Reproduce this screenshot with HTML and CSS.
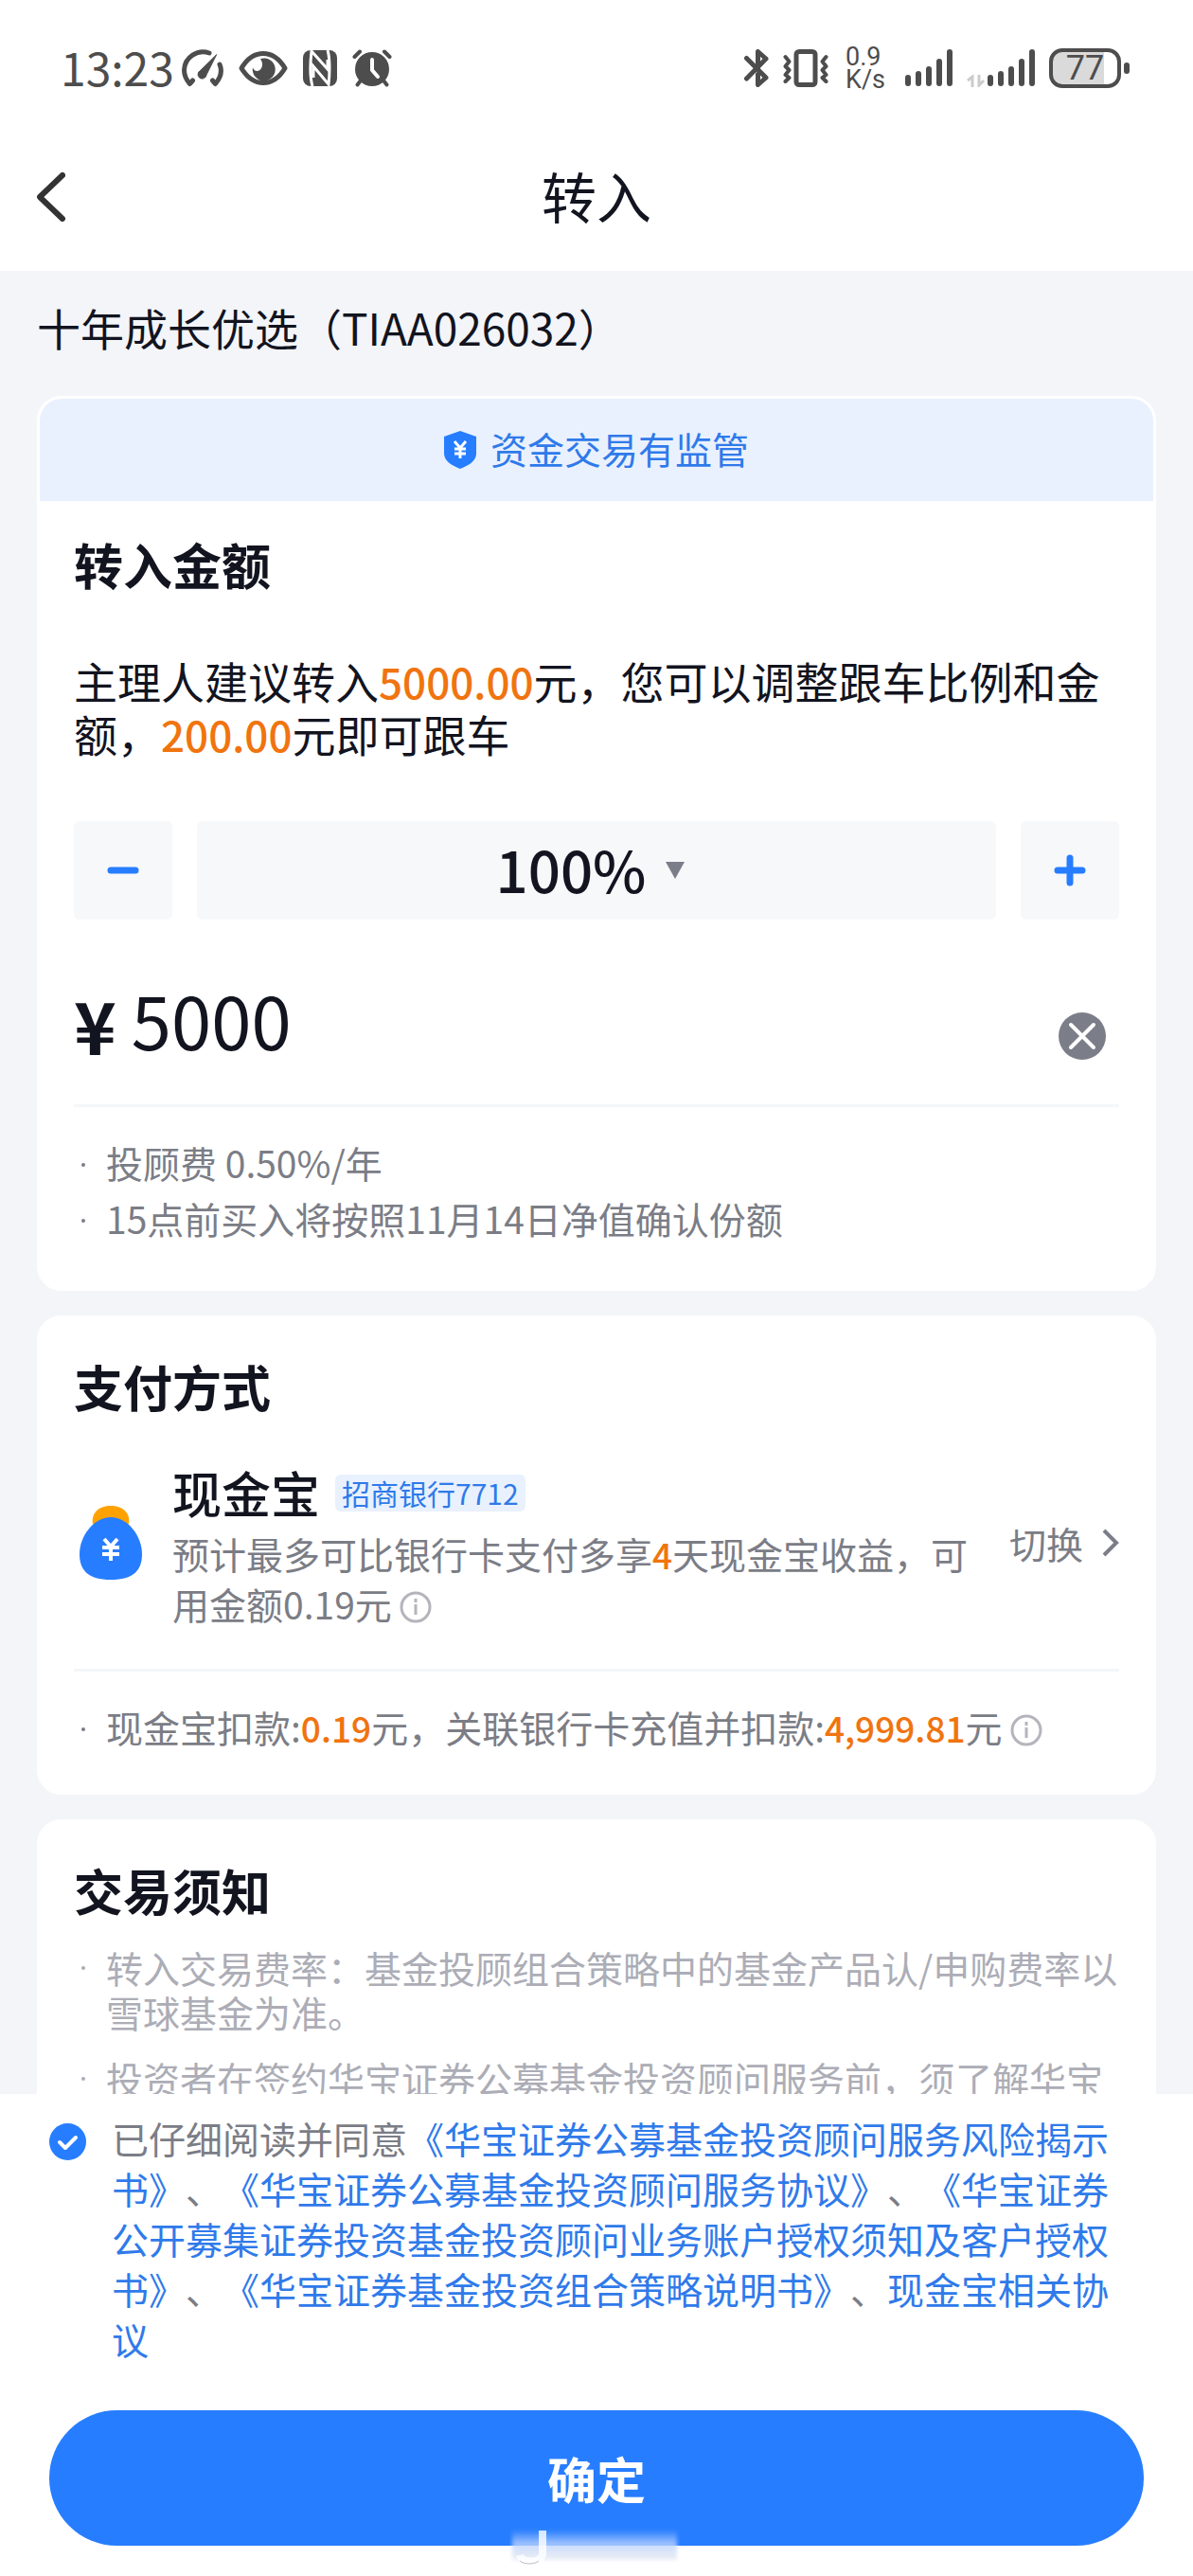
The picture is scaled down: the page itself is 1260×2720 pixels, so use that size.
FILE: index.html
```html
<!DOCTYPE html>
<html lang="zh-CN">
<head>
    <meta charset="UTF-8">
    <meta name="viewport" content="width=device-width, initial-scale=1.0">
    <title>转入</title>
    <link rel="stylesheet" href="styles.css">
</head>
<body>
    <div class="page">
        <header class="header">
            <div class="status-bar">
                <div class="status-left">
                    <span class="time">13:23</span>
                    <svg class="icon-gauge" width="44" height="40" viewBox="0 0 44 40" fill="none" stroke="#4d4d4d" stroke-width="5" stroke-linecap="round" stroke-linejoin="round">
                        <path d="M29 4C17 -0.500 3 8 2.500 22c0 6 2 10 6 14.500l3-3.500"/>
                        <path d="M40 16c3 7 1 14-4.500 20.500l-3-3.500"/>
                        <path d="M36.500 6L26 27a4.500 4.500 0 1 1-6.500-4.500z" fill="#4d4d4d" stroke-width="1"/>
                    </svg>
                    <svg class="icon-eye" width="52" height="36" viewBox="0 0 52 36" fill="none" stroke="#4d4d4d" stroke-width="5">
                        <path d="M3 18C9 8 17 2.500 26 2.500S43 8 49 18C43 28 35 33.500 26 33.500S9 28 3 18z" stroke-linejoin="round"/>
                        <path d="M23 8a12 12 0 1 1-8 9c1 5 7 5 9 1 2-3 1-7-1-10z" fill="#4d4d4d" stroke="none"/>
                    </svg>
                    <svg class="icon-nfc" width="36" height="38" viewBox="0 0 36 38">
                        <rect width="36" height="38" rx="8" fill="#4d4d4d"/>
                        <path d="M10 38C7 28 8 10 9 1L26 20V10M26 0c3 10 2 28 1 36L11 17v12" fill="none" stroke="#fff" stroke-width="3"/>
                    </svg>
                    <svg class="icon-alarm" width="42" height="40" viewBox="0 0 42 40" fill="none" stroke="#4d4d4d" stroke-width="4" stroke-linecap="round">
                        <circle cx="21" cy="21" r="18" fill="#4d4d4d" stroke="none"/>
                        <path d="M2.500 8L8 2.500M39.500 8L34 2.500M9 33l-3.500 4.500M33 33l3.500 4.500"/>
                        <path d="M21 11v11l6 7" stroke="#fff"/>
                    </svg>
                </div>
                <div class="status-right">
                    <svg class="icon-bluetooth" width="26" height="40" viewBox="0 0 26 40" fill="none" stroke="#4d4d4d" stroke-width="5" stroke-linecap="round" stroke-linejoin="round">
                        <path d="M2.500 9.500L23 30l-8.500 7.500v-11M2.500 31L23 10l-8.500-7.500V20"/>
                    </svg>
                    <svg class="icon-vibrate" width="48" height="40" viewBox="0 0 48 40" fill="none" stroke="#4d4d4d" stroke-width="4" stroke-linecap="round" stroke-linejoin="round">
                        <rect x="14" y="2.500" width="20" height="35" rx="3" stroke-width="5"/>
                        <path d="M2.500 8l4 5-4 5 4 4-4 5 4 3-4 4M45.500 8l-4 5 4 5-4 4 4 5-4 3 4 4"/>
                    </svg>
                    <span class="speed">0.9<br>K/s</span>
                    <svg class="icon-signal" width="50" height="40" viewBox="0 0 50 40" stroke="#4d4d4d" stroke-width="6" stroke-linecap="round">
                        <path d="M3 30v6M14 26v10M25 21v15M36 13v23M47 3v33"/>
                    </svg>
                    <svg class="icon-signal-data" width="72" height="40" viewBox="0 0 72 40">
                        <path d="M1 33l5-4v11M13 27v11l5-5" fill="none" stroke="#ccc" stroke-width="3"/>
                        <path d="M25 30v6M36 26v10M47 21v15M58 13v23M69 3v33" stroke="#4d4d4d" stroke-width="6" stroke-linecap="round"/>
                    </svg>
                    <div class="battery"><span class="battery-level">77</span></div>
                </div>
            </div>
            <nav class="nav-bar">
                <button class="back" type="button" aria-label="返回">
                    <svg width="30" height="52" viewBox="0 0 30 52" fill="none" stroke="#333" stroke-width="6" stroke-linecap="round" stroke-linejoin="round">
                        <path d="M27 3L3 26l24 23"/>
                    </svg>
                </button>
                <h1>转入</h1>
            </nav>
        </header>

        <main class="content">
            <p class="fund-name">十年成长优选（TIAA026032）</p>

            <section class="card">
                <div class="banner">
                    <svg width="34" height="40" viewBox="0 0 34 40">
                        <path d="M17 0l17 6v18c0 8-9 13-17 16C9 37 0 32 0 24V6z" fill="#277dff"/>
                        <path d="M11 11l6 7 6-7M17 18v11M11 19h12M11 24h12" fill="none" stroke="#fff" stroke-width="3"/>
                    </svg>
                    <span>资金交易有监管</span>
                </div>
                <div class="card-body">
                    <h2>转入金额</h2>
                    <p class="advice">主理人建议转入<em>5000.00</em>元，您可以调整跟车比例和金额，<em>200.00</em>元即可跟车</p>
                    <div class="stepper">
                        <button class="step" type="button" aria-label="减少">
                            <svg width="34" height="34" viewBox="0 0 34 34" stroke="#277dff" stroke-width="7" stroke-linecap="round">
                                <path d="M4 17h26"/>
                            </svg>
                        </button>
                        <label class="ratio">
                            <select aria-label="跟车比例">
                                <option>100%</option>
                            </select>
                            <svg width="20" height="18" viewBox="0 0 20 18">
                                <path d="M0 0h20L10 18z" fill="#7b7d88"/>
                            </svg>
                        </label>
                        <button class="step" type="button" aria-label="增加">
                            <svg width="34" height="34" viewBox="0 0 34 34" stroke="#277dff" stroke-width="7" stroke-linecap="round">
                                <path d="M4 17h26M17 4v26"/>
                            </svg>
                        </button>
                    </div>
                    <div class="amount">
                        <label for="amount">¥</label>
                        <input type="text" id="amount" name="amount" value="5000" inputmode="decimal">
                        <button class="clear" type="button" aria-label="清空">
                            <svg width="50" height="50" viewBox="0 0 50 50">
                                <circle cx="25" cy="25" r="25" fill="#7b7d88"/>
                                <path d="M13 13l24 24M37 13L13 37" stroke="#fff" stroke-width="4" stroke-linecap="round"/>
                            </svg>
                        </button>
                    </div>
                    <ul class="notes">
                        <li>投顾费 0.50%/年</li>
                        <li>15点前买入将按照11月14日净值确认份额</li>
                    </ul>
                </div>
            </section>

            <section class="card">
                <div class="card-body">
                    <h2>支付方式</h2>
                    <div class="payment">
                        <svg class="bag" width="66" height="78" viewBox="0 0 66 78">
                            <path d="M14 19C12 7 21 0 33 0s21 7 19 19z" fill="#ffa200"/>
                            <path d="M33 12c18 0 33 20 33 39 0 17-9 27-33 27S0 68 0 51C0 32 15 12 33 12z" fill="#277dff"/>
                            <path d="M26 35l7 8 7-8M33 43v15M24 44h18M24 51h18" fill="none" stroke="#fff" stroke-width="4"/>
                        </svg>
                        <div class="payment-info">
                            <div class="payment-name">
                                <strong>现金宝</strong>
                                <span class="tag">招商银行7712</span>
                            </div>
                            <p>预计最多可比银行卡支付多享<em>4</em>天现金宝收益，可用金额0.19元<svg class="info" width="34" height="34" viewBox="0 0 34 34" fill="none" stroke="#b4b5bc" stroke-width="3">
                                <circle cx="17" cy="17" r="15"/>
                                <path d="M17 14v11M17 8v4"/>
                            </svg></p>
                        </div>
                        <a class="switch" href="#">切换
                            <svg width="18" height="30" viewBox="0 0 18 30" fill="none" stroke="#7b7d88" stroke-width="4">
                                <path d="M2 2l13 13L2 28"/>
                            </svg>
                        </a>
                    </div>
                    <ul class="notes">
                        <li>现金宝扣款:<em>0.19</em>元，关联银行卡充值并扣款:<em>4,999.81</em>元<svg class="info" width="34" height="34" viewBox="0 0 34 34" fill="none" stroke="#b4b5bc" stroke-width="3">
                            <circle cx="17" cy="17" r="15"/>
                            <path d="M17 14v11M17 8v4"/>
                        </svg></li>
                    </ul>
                </div>
            </section>

            <section class="card">
                <div class="card-body">
                    <h2>交易须知</h2>
                    <ul class="terms">
                        <li>转入交易费率：基金投顾组合策略中的基金产品认/申购费率以雪球基金为准。</li>
                        <li>投资者在签约华宝证券公募基金投资顾问服务前，须了解华宝</li>
                    </ul>
                </div>
            </section>
        </main>

        <footer class="footer">
            <div class="agreement">
                <input type="checkbox" id="agree" checked>
                <p><label for="agree">已仔细阅读并同意</label><a href="#">《华宝证券公募基金投资顾问服务风险揭示书》</a>、<a href="#">《华宝证券公募基金投资顾问服务协议》</a>、<a href="#">《华宝证券公开募集证券投资基金投资顾问业务账户授权须知及客户授权书》</a>、<a href="#">《华宝证券基金投资组合策略说明书》</a>、<a href="#">现金宝相关协议</a></p>
            </div>
            <div class="submit-row">
                <button class="submit" type="submit">确定</button>
                <svg class="smudge" width="180" height="40" viewBox="0 0 180 40">
                    <defs>
                        <linearGradient id="fade" x1="0" y1="0" x2="0" y2="1">
                            <stop offset="0" stop-color="#a9c8ff" stop-opacity="0"/>
                            <stop offset="0.450" stop-color="#b9d2ff" stop-opacity="0.8"/>
                            <stop offset="1" stop-color="#e2e6ee" stop-opacity="0.7"/>
                        </linearGradient>
                        <filter id="soft"><feGaussianBlur stdDeviation="2"/></filter>
                    </defs>
                    <rect x="3" y="3" width="174" height="32" fill="url(#fade)" filter="url(#soft)"/>
                    <path d="M35 4v24c0 11-22 11-24 2" fill="none" stroke="#fff" stroke-width="8" stroke-opacity="0.8"/>
                    <path d="M11 36c4 4 16 4 20 0" fill="none" stroke="#b9bcc6" stroke-width="1"/>
                </svg>
            </div>
        </footer>
    </div>
</body>
</html>
```

FILE: styles.css
```css
* {
    box-sizing: border-box;
}
body {
    margin: 0;
    font-family: "Noto Sans CJK SC", sans-serif;
    font-size: 39px;
    color: #12141f;
    background-color: #f3f5f9;
    text-spacing-trim: space-all;
}
h1, h2, p, ul {
    margin: 0;
    padding: 0;
}
svg {
    flex: none;
}
button {
    padding: 0;
    border: none;
    background: none;
    font-family: inherit;
    cursor: pointer;
}
a {
    color: inherit;
    text-decoration: none;
}
em {
    color: #f0740f;
    font-size: 37px;
    font-style: normal;
    font-weight: 500;
}
.page {
    display: flex;
    flex-direction: column;
    height: 100vh;
}

/* header */
.header {
    flex: none;
    background-color: #fff;
}
.status-bar {
    display: flex;
    justify-content: space-between;
    height: 130px;
    padding: 14px 76px 0 64px;
    color: #4d4d4d;
}
.status-left,
.status-right {
    display: flex;
    align-items: center;
    gap: 16px;
}
.status-right {
    gap: 15px;
}
.time {
    margin-right: -8px;
    padding-bottom: 4px;
    font-size: 48px;
}
.speed {
    margin-left: 3px;
    font-family: Roboto, sans-serif;
    font-size: 27px;
    line-height: 24px;
}
.icon-signal {
    margin-left: 6px;
}
.battery {
    position: relative;
    width: 76px;
    height: 42px;
    border: 4px solid #4d4d4d;
    border-radius: 14px;
    background: linear-gradient(to right, #dadada 80%, #fff 80%);
}
.battery::after {
    content: "";
    position: absolute;
    top: 11px;
    right: -13px;
    width: 6px;
    height: 12px;
    border-radius: 3px;
    background-color: #4d4d4d;
}
.battery-level {
    display: block;
    font-family: Roboto, sans-serif;
    font-size: 36px;
    line-height: 34px;
    text-align: center;
}
.nav-bar {
    display: grid;
    grid-template-columns: 1fr auto 1fr;
    align-items: center;
    height: 156px;
    padding: 0 39px;
}
.back {
    display: flex;
    justify-self: start;
}
.nav-bar h1 {
    padding-bottom: 4px;
    font-size: 58px;
    font-weight: 400;
}

/* cards */
.content {
    flex: 1;
    min-height: 0;
    overflow: hidden;
    padding: 0 39px;
}
.fund-name {
    padding: 29px 0 43px;
    font-size: 46px;
    line-height: 60px;
}
.card {
    margin-bottom: 26px;
    border: 3px solid #fff;
    border-radius: 26px;
    background-color: #fff;
    overflow: hidden;
}
.card-body {
    padding: 38px 36px;
}
.banner {
    display: flex;
    align-items: center;
    justify-content: center;
    gap: 15px;
    height: 108px;
    background-color: #e9f1fe;
    color: #2f7aea;
}
.banner span {
    padding-bottom: 4px;
}
.banner + .card-body {
    padding: 33px 36px 44px;
}
.card h2 {
    font-size: 52px;
    line-height: 68px;
}
.advice {
    margin-top: 61px;
    font-size: 46px;
    line-height: 55px;
}
.advice em {
    font-size: 44px;
}
.stepper {
    display: flex;
    gap: 26px;
    margin-top: 64px;
}
.step,
.ratio {
    display: flex;
    align-items: center;
    justify-content: center;
    height: 104px;
    border-radius: 6px;
    background-color: #f6f8fa;
}
.step {
    width: 104px;
}
.ratio {
    flex: 1;
    gap: 20px;
    padding-right: 14px;
}
.ratio select {
    appearance: none;
    padding: 0 0 6px;
    border: none;
    background: none;
    color: inherit;
    font-family: inherit;
    font-size: 60px;
    font-weight: 500;
}
.amount {
    display: flex;
    align-items: center;
    height: 198px;
    padding: 14px 14px 0 0;
    border-bottom: 3px solid #f5f6f8;
}
.amount label {
    padding-top: 10px;
    font-size: 76px;
    font-weight: 700;
}
.amount input {
    flex: 1;
    min-width: 0;
    padding: 0 0 0 16px;
    border: none;
    background: none;
    color: inherit;
    font-family: inherit;
    font-size: 76px;
}
.clear {
    display: flex;
    padding-top: 36px;
}
.notes,
.terms {
    list-style: none;
}
.notes {
    padding-top: 29px;
    color: #7b7d86;
    line-height: 59px;
}
.notes li,
.terms li {
    position: relative;
    padding-left: 34px;
}
.notes li::before,
.terms li::before {
    content: "";
    position: absolute;
    top: 30px;
    left: 8px;
    width: 4px;
    height: 4px;
    border-radius: 2px;
    background-color: currentColor;
}
.terms li::before {
    top: 22px;
}
.info {
    margin-left: 8px;
    vertical-align: -4px;
}

/* payment */
.payment {
    display: flex;
    align-items: center;
    padding: 40px 0 43px;
    border-bottom: 3px solid #f5f6f8;
    color: #7b7d86;
}
.bag {
    margin: 0 32px 0 6px;
}
.payment-info {
    flex: 1;
    line-height: 52px;
}
.payment-name {
    display: flex;
    align-items: center;
    gap: 16px;
    height: 76px;
    color: #12141f;
}
.payment-name strong {
    font-size: 52px;
    font-weight: 500;
}
.tag {
    padding: 0 7px;
    border-radius: 6px;
    background-color: #e9f1fe;
    color: #2f7aea;
    font-size: 30px;
    line-height: 39px;
}
.switch {
    display: flex;
    align-items: center;
    gap: 20px;
    margin-left: 30px;
}
.terms {
    padding-top: 24px;
    color: #acadb6;
    line-height: 47px;
}
.terms li {
    margin-bottom: 23px;
}

/* footer */
.footer {
    flex: none;
    padding: 20px 52px 32px;
    background-color: #fff;
}
.agreement {
    display: flex;
    gap: 27px;
    color: #7b7d86;
    line-height: 53px;
}
.agreement a {
    color: #2f7aea;
}
.agreement input {
    flex: none;
    appearance: none;
    width: 39px;
    height: 39px;
    margin: 11px 0 0;
    border-radius: 50%;
    background: #277dff url("data:image/svg+xml,%3Csvg xmlns='http://www.w3.org/2000/svg' viewBox='0 0 39 39'%3E%3Cpath d='M11 20l6 6 11-11' fill='none' stroke='%23fff' stroke-width='4' stroke-linecap='round' stroke-linejoin='round'/%3E%3C/svg%3E");
}
.submit-row {
    position: relative;
    margin-top: 49px;
}
.submit {
    display: block;
    width: 100%;
    height: 143px;
    border-radius: 72px;
    background-color: #277dff;
    color: #fff;
    font-size: 52px;
    font-weight: 700;
}
.smudge {
    position: absolute;
    left: 50%;
    bottom: -20px;
    margin-left: -92px;
}
```
